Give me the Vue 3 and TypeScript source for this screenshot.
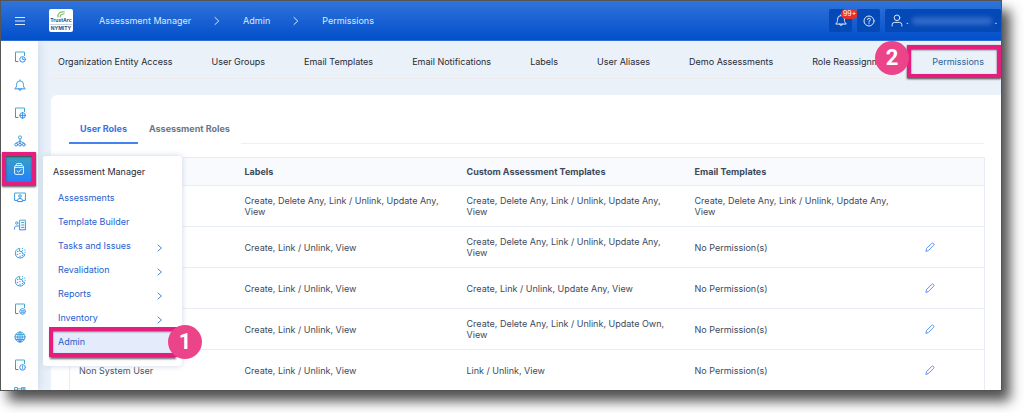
<script setup lang="ts">
interface Row {
  role: string
  labels: string
  custom: string
  email: string
  editable: boolean
}

const crumbs: string[] = ['Assessment Manager', 'Admin', 'Permissions']

const tabs: string[] = [
  'Organization Entity Access',
  'User Groups',
  'Email Templates',
  'Email Notifications',
  'Labels',
  'User Aliases',
  'Demo Assessments',
  'Role Reassignment',
  'Permissions',
]

const menu: { label: string; expandable: boolean }[] = [
  { label: 'Assessments', expandable: false },
  { label: 'Template Builder', expandable: false },
  { label: 'Tasks and Issues', expandable: true },
  { label: 'Revalidation', expandable: true },
  { label: 'Reports', expandable: true },
  { label: 'Inventory', expandable: true },
  { label: 'Admin', expandable: false },
]

const full = 'Create, Delete Any, Link / Unlink, Update Any, View'
const basic = 'Create, Link / Unlink, View'
const none = 'No Permission(s)'

const rows: Row[] = [
  { role: '', labels: full, custom: full, email: full, editable: false },
  { role: '', labels: basic, custom: full, email: none, editable: true },
  { role: '', labels: basic, custom: 'Create, Link / Unlink, Update Any, View', email: none, editable: true },
  { role: '', labels: basic, custom: 'Create, Delete Any, Link / Unlink, Update Own, View', email: none, editable: true },
  { role: 'Non System User', labels: basic, custom: 'Link / Unlink, View', email: none, editable: true },
]

const page = 'M4 10.5H1.5V1H10.5V4.5'
const badge = 'M11.4 8.4a2.8 2.8 0 1 1-5.6 0a2.8 2.8 0 1 1 5.6 0'
const cookie =
  'M5.4 1.4A4.8 4.8 0 1 0 10.8 7.4L8.6 6.8L8 4.6L5.8 4.2ZM8.2 1.4h.4M10.6 3h.4M8.4 3.4h.2M11 5.4h.2M3.4 4.6h.6M3.2 7.4h.6M5.8 9.2h.6M5.8 6.6h.4M8.2 8.6h.4'

const rail: { name: string; path: string }[] = [
  { name: 'History', path: page + badge + 'M8.6 6.8V8.4H10.2' },
  { name: 'Alerts', path: 'M1 9.6C2.4 8.6 2.6 7.4 2.6 5.2A3.4 3.4 0 0 1 9.4 5.2C9.4 7.4 9.6 8.6 11 9.6ZM6 1.8V.8M4.6 9.8A1.4 1.4 0 0 0 7.4 9.8' },
  { name: 'Regions', path: page + badge + 'M5.8 8.4H11.4M8.6 5.6V11.2' },
  { name: 'Data map', path: 'M7.6 2.4a1.6 1.6 0 1 1-3.2 0a1.6 1.6 0 1 1 3.2 0M6 4V8M6 6L2.4 8M6 6L9.6 8M3.6 9.6a1.4 1.4 0 1 1-2.8 0a1.4 1.4 0 1 1 2.8 0M7.4 9.6a1.4 1.4 0 1 1-2.8 0a1.4 1.4 0 1 1 2.8 0M11.2 9.6a1.4 1.4 0 1 1-2.8 0a1.4 1.4 0 1 1 2.8 0' },
  { name: 'Assessment Manager', path: 'M2.6 2.6H9.4Q10.4 2.6 10.4 3.6V10Q10.4 11.4 9.2 11.4H2.8Q1.6 11.4 1.6 10V3.6Q1.6 2.6 2.6 2.6ZM3.4 2.4V1.4Q3.4.6 4 .6H8Q8.6.6 8.6 1.4V2.4M1.6 4.4H10.4M4 7.8L5.6 9.2L8.2 6.4' },
  { name: 'Training', path: 'M3 9.4H.6V2H11.4V9.4H9M7.3 5a1.3 1.3 0 1 1-2.6 0a1.3 1.3 0 1 1 2.6 0M3.6 10.2V9.2Q3.6 7.4 6 7.4T8.4 9.2V10.2Z' },
  { name: 'Contacts', path: 'M6 1.2H11.4V10.8H6ZM7.6 3.6H9.8M7.6 6H9.8M7.6 8.4H9.8M4 4a1.2 1.2 0 1 1-2.4 0a1.2 1.2 0 1 1 2.4 0M.6 10V8.6Q.8 7 2.9 7H4.6' },
  { name: 'Cookies', path: cookie },
  { name: 'Consent', path: cookie },
  { name: 'Requests', path: page + badge + 'M7.4 7.8H9.8M7.4 9.2H9.8' },
  { name: 'Websites', path: 'M11 6A5 5 0 1 1 1 6A5 5 0 1 1 11 6M6 1V11M1 6H11M1.8 3.6H10.2M1.8 8.4H10.2M6 1C2.8 4 2.8 8 6 11M6 1C9.2 4 9.2 8 6 11' },
  { name: 'Notices', path: page + badge + 'M8.6 7V8.4M8.6 9.6V9.8' },
  { name: 'Workflow', path: 'M1 .5H3.5V3H1ZM3.5 1.8H8M8 .3H11V3.3H8ZM9 1V2.6M10 1V2.6' },
]
const activeRail = 'Assessment Manager'
</script>

<template>
  <div class="stage">
    <div class="frame">
      <svg class="defs" width="0" height="0" aria-hidden="true">
        <linearGradient id="railGradient" gradientUnits="userSpaceOnUse" x1="0" y1="0" x2="0" y2="12">
          <stop offset="0" stop-color="#4ab0c8" />
          <stop offset="1" stop-color="#2c83f6" />
        </linearGradient>
      </svg>

      <header class="topbar">
        <button class="burger" aria-label="Toggle menu">
          <svg width="10" height="10" viewBox="0 0 10 10"><path d="M0 1.5H10M0 5H10M0 8.5H10" /></svg>
        </button>
        <a class="logo" href="#" aria-label="TrustArc Nymity">
          <svg width="24" height="23" viewBox="0 0 24 23">
            <path d="M9 8C8.4 4.4 11 2.2 15.4 3M11.2 8C11 6 12.5 4.8 15 5" fill="none" stroke="#83bd68" stroke-width="1.2" />
            <text x="12" y="13" text-anchor="middle" font-size="5" fill="#28548b">TrustArc</text>
            <path d="M1 15.5H23" stroke="#ccd3dc" stroke-width="1" />
            <text x="12" y="21" text-anchor="middle" font-size="5" fill="#35517a">NYMITY</text>
          </svg>
        </a>
        <nav class="crumbs" aria-label="Breadcrumb">
          <template v-for="(crumb, i) in crumbs" :key="crumb">
            <svg v-if="i" width="6" height="10" viewBox="0 0 6 10"><path d="M1 1.5L4.8 5L1 8.5" /></svg>
            <a href="#">{{ crumb }}</a>
          </template>
        </nav>
        <div class="tools">
          <button class="tool" aria-label="Notifications">
            <svg width="12" height="13" viewBox="0 0 12 13"><path d="M1 9.8C2.5 8.4 2.6 7 2.6 5A3.4 3.4 0 0 1 9.4 5C9.4 7 9.5 8.4 11 9.8ZM6 1.6V.6M4.6 10A1.4 1.4 0 0 0 7.4 10" /></svg>
            <span class="count">99+</span>
          </button>
          <button class="tool" aria-label="Help">
            <svg width="12" height="12" viewBox="0 0 12 12"><circle cx="6" cy="6" r="5" /><path d="M4.5 4.7Q4.6 3.2 6 3.2T7.5 4.6Q7.5 5.5 6 6.2V7.2M6 8.6V8.8" /></svg>
          </button>
          <button class="tool user" aria-label="Account">
            <svg width="12" height="13" viewBox="0 0 12 13"><circle cx="6" cy="3.8" r="2.8" /><path d="M1.2 12V10.6Q1.2 8.4 3.6 8.4H8.4Q10.8 8.4 10.8 10.6V12" /></svg>
            <span>.</span><span class="redacted"></span><span>.</span>
          </button>
        </div>
      </header>

      <div class="body">
        <aside class="rail">
          <button v-for="item in rail" :key="item.name" class="rail-item" :class="{ active: item.name === activeRail }" :aria-label="item.name">
            <svg width="12" height="12" viewBox="0 0 12 12"><path :d="item.path" /></svg>
          </button>
        </aside>

        <main class="content">
          <nav class="tabs">
            <a v-for="tab in tabs" :key="tab" href="#" :class="{ current: tab === 'Permissions' }">{{ tab }}</a>
            <span class="step step-two">2</span>
          </nav>

          <section class="card">
            <div class="subtabs" role="tablist">
              <button role="tab" aria-selected="true" class="selected">User Roles</button>
              <button role="tab" aria-selected="false">Assessment Roles</button>
            </div>
            <table>
              <colgroup>
                <col class="c-role" /><col class="c-labels" /><col class="c-custom" /><col class="c-email" /><col class="c-edit" />
              </colgroup>
              <thead>
                <tr><th></th><th>Labels</th><th>Custom Assessment Templates</th><th>Email Templates</th><th></th></tr>
              </thead>
              <tbody>
                <tr v-for="(row, i) in rows" :key="i">
                  <td>{{ row.role }}</td>
                  <td>{{ row.labels }}</td>
                  <td>{{ row.custom }}</td>
                  <td>{{ row.email }}</td>
                  <td>
                    <button v-if="row.editable" class="edit" aria-label="Edit permissions">
                      <svg width="10" height="10" viewBox="0 0 10 10"><path d="M1 9L1.5 6.6L6.8 1.3Q7.6.6 8.5 1.5Q9.4 2.4 8.7 3.2L3.4 8.5Z" /></svg>
                    </button>
                  </td>
                </tr>
              </tbody>
            </table>
          </section>
        </main>
      </div>

      <nav class="flyout" aria-label="Assessment Manager">
        <h2>Assessment Manager</h2>
        <a v-for="item in menu" :key="item.label" href="#" :class="{ marked: item.label === 'Admin' }">
          <span>{{ item.label }}</span>
          <svg v-if="item.expandable" width="6" height="8" viewBox="0 0 6 8"><path d="M1 1L4.4 4L1 7" /></svg>
        </a>
        <span class="step step-one">1</span>
      </nav>
    </div>
  </div>
</template>

<style>
body {
  background: #fff;
}
</style>

<style scoped>
*,
*::after {
  box-sizing: border-box;
}
.stage {
  height: 100vh;
  padding: 0 22px 22px 0;
  overflow: hidden;
}
.frame {
  position: relative;
  display: flex;
  flex-direction: column;
  height: 100%;
  border: 1px solid #555;
  background: #eaf1f9;
  font: 9px/12px Inter, "Noto Sans", sans-serif;
  color: #1f2a37;
  box-shadow: 8px 10px 12px #505050;
}
.defs {
  position: absolute;
}
a {
  color: inherit;
  text-decoration: none;
}
button {
  padding: 0;
  border: 0;
  background: none;
  color: inherit;
  font: inherit;
}
svg {
  display: block;
  flex: none;
}
svg path,
svg circle {
  stroke-linecap: round;
  stroke-linejoin: round;
}
.topbar {
  display: flex;
  flex: none;
  align-items: center;
  height: 40px;
  padding-left: 14px;
  border-bottom: 1px solid #2c6dd6;
  background: linear-gradient(#3174da, #024fcb);
  color: #dce9fc;
}
.topbar button svg,
.crumbs svg {
  fill: none;
  stroke: #dce9fc;
  stroke-width: 1;
}
.logo {
  margin-left: 24px;
  border-radius: 2px;
  background: #fff;
  font-weight: 700;
}
.crumbs {
  display: flex;
  align-items: center;
  gap: 23px;
  margin-left: 26px;
}
.tools {
  display: flex;
  gap: 5px;
  margin-left: auto;
}
.tool {
  position: relative;
  display: flex;
  align-items: center;
  justify-content: center;
  width: 23px;
  height: 23px;
  border-radius: 2px;
  background: #0549b7;
}
.tool.user {
  justify-content: flex-start;
  gap: 3px;
  width: 116px;
  padding-left: 6px;
}
.count {
  position: absolute;
  top: 0;
  left: 12px;
  padding: 0 2px;
  border-radius: 5px;
  background: #e2302c;
  color: #fff;
  font-size: 7px;
  line-height: 10px;
}
.redacted {
  width: 80px;
  height: 8px;
  border-radius: 4px;
  background: #2f69c8;
  filter: blur(2px);
}
.body {
  display: flex;
  flex: 1;
  min-height: 0;
  overflow: hidden;
}
.rail {
  flex: none;
  width: 37px;
  padding-top: 2px;
  background: #fff;
  box-shadow: 0 0 12px #c2d3e6;
}
.rail-item {
  display: flex;
  align-items: center;
  justify-content: center;
  width: 100%;
  height: 28px;
}
.rail-item svg {
  fill: none;
  stroke: url(#railGradient);
  stroke-width: 1;
}
.rail-item.active {
  position: relative;
  width: 34px;
  height: 34px;
  margin: -3px 0 -3px 1px;
  border: 4px solid #e41d7e;
  background: linear-gradient(#38a1c2, #2480fb);
  box-shadow: 0 1px 2px #555, inset 0 1px 2px #444;
}
.rail-item.active svg {
  stroke: #e3f4ff;
}
.content {
  display: flex;
  flex: 1;
  flex-direction: column;
  min-width: 0;
  padding-left: 13px;
}
.tabs {
  position: relative;
  display: flex;
  flex: none;
  align-items: center;
  justify-content: space-between;
  height: 38px;
  margin-bottom: 16px;
  padding: 4px 17px 0 7px;
  border-bottom: 1px solid #ececee;
}
.tabs .current {
  color: #2b6199;
}
.tabs .current::after {
  position: absolute;
  top: 4px;
  right: 0;
  width: 94px;
  height: 33px;
  border: 4px solid #e41d7e;
  box-shadow: 0 1px 2px #444, inset 0 1px 2px #555;
  content: "";
}
.step {
  position: absolute;
  width: 34px;
  height: 34px;
  border-radius: 50%;
  background: #ec4488;
  color: #fff;
  font: 700 22px/34px Roboto, sans-serif;
  text-align: center;
}
.step-two {
  top: 0;
  right: 92px;
}
.card {
  flex: 1;
  padding: 22px 17px 0 18px;
  border-radius: 6px 0 0 0;
  background: #fff;
}
.subtabs {
  display: flex;
  height: 27px;
}
.subtabs::after {
  flex: 1;
  border-bottom: 1px solid #eef0f5;
  content: "";
}
.subtabs button {
  padding: 0 11px 4px;
  color: #6b7688;
  font-weight: 700;
}
.subtabs .selected {
  padding-bottom: 2px;
  border-bottom: 2px solid #4583ee;
  color: #3673e4;
}
table {
  width: 100%;
  margin-top: 13px;
  border: 1px solid #e8edf5;
  border-collapse: collapse;
  table-layout: fixed;
  color: #3d495b;
  line-height: 11px;
}
/* Proportional shares: the fixed layout stretches them to the table's width. */
.c-role {
  width: 166px;
}
.c-labels {
  width: 222px;
}
.c-custom {
  width: 228px;
}
.c-email {
  width: 230px;
}
.c-edit {
  width: 69px;
}
tr {
  height: 41px;
  border-bottom: 1px solid #e8edf5;
}
thead tr {
  height: 28px;
  background: #f8fafe;
}
th,
td {
  padding: 0 9px;
  text-align: left;
  vertical-align: middle;
}
.edit {
  display: block;
}
.edit svg {
  fill: none;
  stroke: #5b93f7;
  stroke-width: 1;
}
.flyout {
  position: absolute;
  top: 155px;
  left: 42px;
  width: 139px;
  padding: 9px 8px 12px 9px;
  border-radius: 3px;
  background: #fff;
  box-shadow: 0 0 6px #ccd6e4;
}
.flyout h2 {
  margin: 0 0 8px;
  padding-left: 1px;
  font-size: 9px;
  font-weight: 400;
  line-height: 13px;
}
.flyout a {
  display: flex;
  align-items: center;
  justify-content: space-between;
  height: 24px;
  padding: 0 11px 0 6px;
  color: #2560d0;
}
.flyout a svg {
  margin-top: 3px;
  fill: none;
  stroke: #4a7fe2;
  stroke-width: 1;
}
.flyout .marked {
  background: #e4ecfb;
  outline: 4px solid #e41d7e;
  outline-offset: -1px;
  box-shadow: 0 3px 2px 2px #666, inset 0 1px 2px 1px #777;
}
.step-one {
  right: -20px;
  bottom: 7px;
}
</style>
